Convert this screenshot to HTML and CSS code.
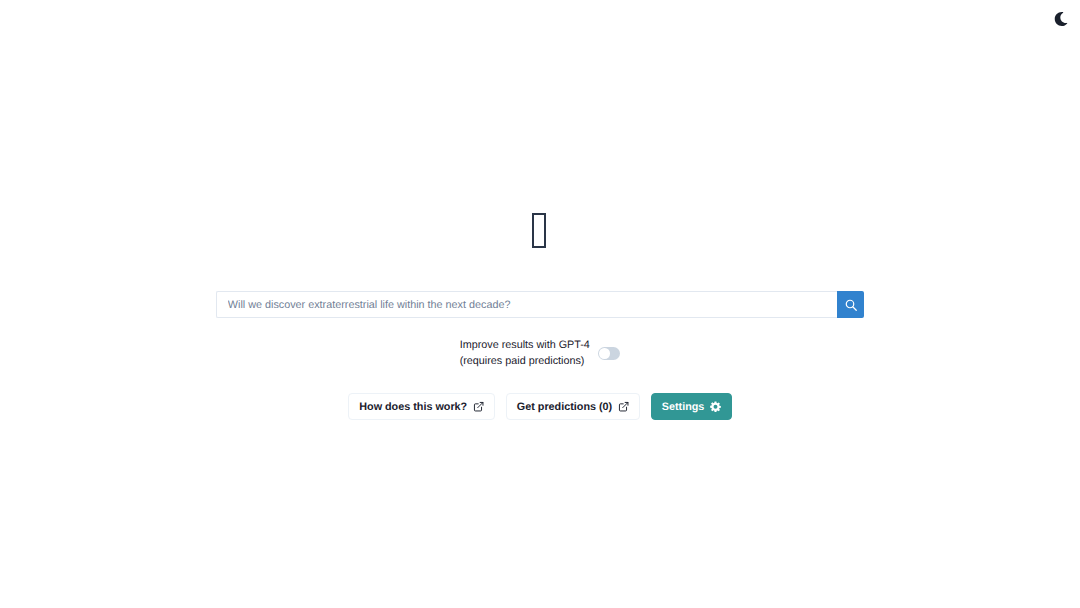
FILE: index.html
```html
<!DOCTYPE html>
<html lang="en">
<head>
  <meta charset="UTF-8">
  <title>Predictions</title>
  <link rel="stylesheet" href="styles.css">
</head>
<body>
  <button class="theme-toggle" aria-label="Toggle dark mode">
    <svg viewBox="0 0 512 512" width="14" height="14"><path fill="#1a202c" d="M283.2 512c79 0 151.100-35.900 198.900-94.800 7.100-8.700-.6-21.400-11.600-19.300-124.900 23.800-239.600-72-239.600-198 0-72.600 38.900-139.400 102-175.300 9.700-5.500 7.300-20.200-3.800-22.300C313.500.9 298.400 0 283.200 0 141.900 0 27.200 114.600 27.200 256s114.500 256 256 256z"/></svg>
  </button>

  <main class="center">
    <div class="logo"><span class="missing-glyph"></span></div>

    <form class="search">
      <input class="search-input" type="text" placeholder="Will we discover extraterrestrial life within the next decade?">
      <button class="search-btn" type="button" aria-label="Search">
        <svg viewBox="0 0 24 24" width="12" height="12" fill="none" stroke="#fff" stroke-width="2.400" stroke-linecap="round"><circle cx="10" cy="10" r="7.500"/><path d="M16 16l6.500 6.500"/></svg>
      </button>
    </form>

    <div class="gpt-row">
      <label class="gpt-label">Improve results with GPT-4<br>(requires paid predictions)</label>
      <span class="switch"><span class="thumb"></span></span>
    </div>

    <div class="actions">
      <a class="btn">How does this work?
        <svg class="ext" viewBox="0 0 24 24" fill="none" stroke="currentColor" stroke-width="2" stroke-linecap="round" stroke-linejoin="round"><path d="M18 13v6a2 2 0 0 1-2 2H5a2 2 0 0 1-2-2V8a2 2 0 0 1 2-2h6"/><path d="M15 3h6v6"/><path d="M10 14L21 3"/></svg>
      </a>
      <a class="btn">Get predictions (0)
        <svg class="ext" viewBox="0 0 24 24" fill="none" stroke="currentColor" stroke-width="2" stroke-linecap="round" stroke-linejoin="round"><path d="M18 13v6a2 2 0 0 1-2 2H5a2 2 0 0 1-2-2V8a2 2 0 0 1 2-2h6"/><path d="M15 3h6v6"/><path d="M10 14L21 3"/></svg>
      </a>
      <a class="btn btn-teal">Settings
        <svg class="gear" viewBox="0 0 24 24"><path fill="#fff" fill-rule="evenodd" d="M10 1h4l.6 3.100 1.700.7 2.600-1.800 2.800 2.800-1.800 2.600.7 1.700L23.700 10.700v3.900l-3.100.6-.7 1.700 1.800 2.600-2.800 2.800-2.600-1.800-1.700.7-.6 3H10l-.6-3.100-1.700-.7-2.600 1.800-2.800-2.800 1.800-2.600-.7-1.700L.3 14.500v-3.900l3.100-.6.7-1.700L2.300 5.700l2.800-2.800 2.600 1.800 1.700-.7L10 1zm2 7.200a4.300 4.300 0 1 0 0 8.600 4.300 4.300 0 0 0 0-8.600z"/></svg>
      </a>
    </div>
  </main>
</body>
</html>
```

FILE: styles.css
```css
* {
  box-sizing: border-box;
}

body {
  margin: 0;
  height: 100vh;
  font-family: "Liberation Sans", Arial, sans-serif;
  font-size: 10.8px;
  text-rendering: geometricPrecision;
  color: #1a202c;
  background: #fff;
}

.theme-toggle {
  position: absolute;
  top: 12px;
  right: 12px;
  width: 14px;
  height: 14px;
  padding: 0;
  border: 0;
  background: none;
}

.center {
  height: 100%;
  padding-top: 15.400px;
  display: flex;
  flex-direction: column;
  align-items: center;
  justify-content: center;
}

.logo {
  height: 72px;
  padding-top: 10px;
  margin-bottom: 16px;
}

.missing-glyph {
  display: block;
  width: 14px;
  height: 35px;
  margin-right: 2px;
  border: 2px solid #2a3547;
}

.search {
  width: 648px;
  display: flex;
}

.search-input {
  flex: 1;
  height: 27px;
  padding: 0 10.8px;
  border: 1px solid #e2e8f0;
  border-right: 0;
  border-radius: 2px 0 0 2px;
  font: 10.8px "Liberation Sans", Arial, sans-serif;
  text-rendering: geometricPrecision;
  color: #1a202c;
}

.search-input::placeholder {
  color: #718096;
  opacity: 1;
}

.search-btn {
  width: 27px;
  height: 27px;
  padding: 0;
  border: 0;
  border-radius: 0 2px 2px 0;
  background: #3182ce;
  display: flex;
  align-items: center;
  justify-content: center;
}

.gpt-row {
  margin-top: 19px;
  display: flex;
  align-items: center;
  gap: 8px;
}

.gpt-label {
  line-height: 16.2px;
}

.switch {
  width: 22.500px;
  height: 13.500px;
  padding: 1.500px;
  border-radius: 7px;
  background: #cbd5e0;
  display: flex;
}

.thumb {
  width: 10.500px;
  height: 10.500px;
  border-radius: 50%;
  background: #fff;
}

.actions {
  margin-top: 23.600px;
  display: flex;
  gap: 10.8px;
}

.btn {
  height: 27px;
  padding: 0 10px;
  border: 1px solid #edf2f7;
  border-radius: 4px;
  display: flex;
  align-items: center;
  gap: 5.400px;
  font-weight: 700;
  font-size: 10.8px;
  color: #1a202c;
}

.btn-teal {
  background: #319795;
  border-color: #319795;
  color: #fff;
}

.ext {
  width: 11.400px;
  height: 11.400px;
}

.gear {
  width: 11px;
  height: 11px;
}
```
